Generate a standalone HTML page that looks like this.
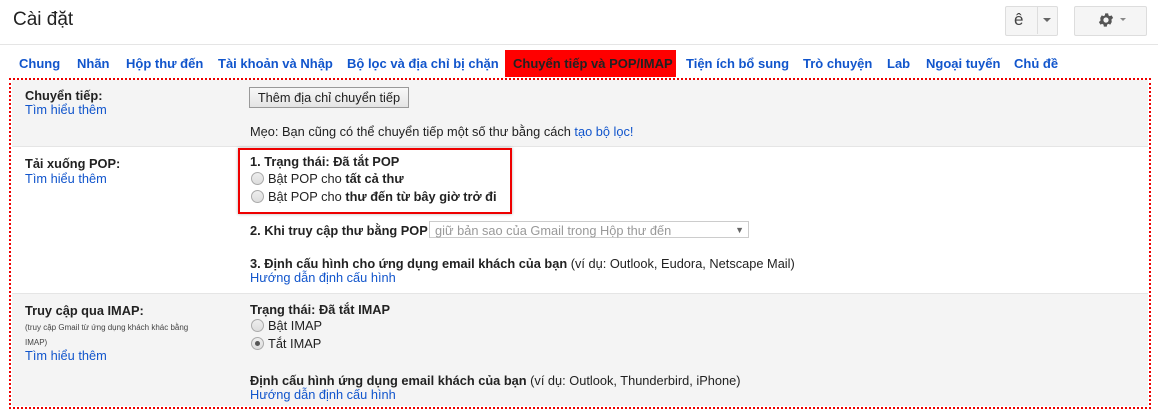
<!DOCTYPE html>
<html><head><meta charset="utf-8"><style>
body{margin:0;width:1158px;height:410px;background:#fff;font-family:"Liberation Sans",Arial,sans-serif;font-size:12.8px;color:#222;position:relative;overflow:hidden}
.a{position:absolute;white-space:nowrap}
a,.l{color:#15c;text-decoration:none}
.tab{position:absolute;top:56px;font-size:13px;color:#15c;font-weight:bold}
.b{font-weight:bold}
.radio{display:inline-block;width:11px;height:11px;border:1px solid #aaa;border-radius:50%;background:linear-gradient(#eee,#ddd);vertical-align:-2px;margin-right:4px;position:relative}
.radio.on:after{content:"";position:absolute;left:3px;top:3px;width:5px;height:5px;border-radius:50%;background:#555}
</style></head><body>
<div class="a" style="left:13px;top:9px;font-size:19px;color:#222">Cài đặt</div>
<div class="a" style="left:1005px;top:6px;width:51px;height:28px;border:1px solid #ddd;border-radius:2px;background:#f5f5f5"></div>
<div class="a" style="left:1037px;top:6px;width:1px;height:28px;background:#ddd"></div>
<div class="a" style="left:1014px;top:10px;font-size:17px;color:#444">ê</div>
<div class="a" style="left:1043px;top:18px;border:4px solid transparent;border-top:4px solid #666"></div>
<div class="a" style="left:1074px;top:6px;width:71px;height:28px;border:1px solid #ddd;border-radius:2px;background:#f5f5f5"></div>
<svg class="a" style="left:1097px;top:11px" width="18" height="18" viewBox="0 0 24 24"><path fill="#555" d="M19.4 13a7.5 7.5 0 000-2l2.1-1.6-2-3.5-2.5 1a7 7 0 00-1.700-1l-.4-2.7h-4l-.4 2.7a7 7 0 00-1.7 1l-2.5-1-2 3.5L4.6 11a7.5 7.5 0 000 2l-2.1 1.6 2 3.5 2.5-1a7 7 0 001.7 1l.4 2.7h4l.4-2.7a7 7 0 001.7-1l2.5 1 2-3.5zM12 15.5a3.5 3.5 0 110-7 3.5 3.5 0 010 7z"/></svg>
<div class="a" style="left:1120px;top:18px;border:3px solid transparent;border-top:3px solid #888"></div>
<div class="a" style="left:0;top:44px;width:1158px;height:1px;background:#e5e5e5"></div>

<div class="tab" style="left:19px">Chung</div>
<div class="tab" style="left:77px">Nhãn</div>
<div class="tab" style="left:126px">Hộp thư đến</div>
<div class="tab" style="left:218px">Tài khoản và Nhập</div>
<div class="tab" style="left:347px">Bộ lọc và địa chỉ bị chặn</div>
<div class="a" style="left:505px;top:50px;width:171px;height:27px;background:#f00"></div>
<div class="tab" style="left:513px;color:#222">Chuyển tiếp và POP/IMAP</div>
<div class="tab" style="left:686px">Tiện ích bổ sung</div>
<div class="tab" style="left:803px">Trò chuyện</div>
<div class="tab" style="left:887px">Lab</div>
<div class="tab" style="left:926px">Ngoại tuyến</div>
<div class="tab" style="left:1014px">Chủ đề</div>

<div class="a" style="left:12px;top:80px;width:1136px;height:66px;background:#f4f4f4;border-bottom:1px solid #e5e5e5"></div>
<div class="a" style="left:12px;top:293px;width:1136px;height:112px;background:#f4f4f4;border-top:1px solid #e5e5e5"></div>
<div class="a" style="left:9px;top:78px;width:1138px;height:327px;border:2px dotted #e00"></div>

<div class="a b" style="left:25px;top:88px">Chuyển tiếp:</div>
<div class="a l" style="left:25px;top:102px">Tìm hiểu thêm</div>
<div class="a" style="left:249px;top:87px;width:158px;height:19px;border:1px solid #999;background:linear-gradient(#f8f8f8,#e4e4e4);text-align:center;line-height:19px">Thêm địa chỉ chuyển tiếp</div>
<div class="a" style="left:250px;top:124px">Mẹo: Bạn cũng có thể chuyển tiếp một số thư bằng cách <span class="l">tạo bộ lọc!</span></div>

<div class="a b" style="left:25px;top:156px">Tải xuống POP:</div>
<div class="a l" style="left:25px;top:171px">Tìm hiểu thêm</div>
<div class="a" style="left:238px;top:148px;width:270px;height:62px;border:2px solid #e00;box-shadow:0 0 3px rgba(0,0,0,.3)"></div>
<div class="a b" style="left:250px;top:154px">1. Trạng thái: Đã tắt POP</div>
<div class="a" style="left:251px;top:171px"><span class="radio"></span>Bật POP cho <b>tất cả thư</b></div>
<div class="a" style="left:251px;top:189px"><span class="radio"></span>Bật POP cho <b>thư đến từ bây giờ trở đi</b></div>
<div class="a b" style="left:250px;top:223px">2. Khi truy cập thư bằng POP</div>
<div class="a" style="left:429px;top:221px;height:17px;border:1px solid #ccc;color:#999;line-height:17px;padding-left:5px;box-sizing:border-box;width:320px">giữ bản sao của Gmail trong Hộp thư đến<span style="position:absolute;right:4px;font-size:9px;color:#666">▼</span></div>
<div class="a" style="left:250px;top:256px"><b>3. Định cấu hình cho ứng dụng email khách của bạn</b> (ví dụ: Outlook, Eudora, Netscape Mail)</div>
<div class="a l" style="left:250px;top:270px">Hướng dẫn định cấu hình</div>

<div class="a b" style="left:25px;top:303px">Truy cập qua IMAP:</div>
<div class="a" style="left:25px;top:320px;font-size:8px;color:#444;line-height:15px">(truy cập Gmail từ ứng dụng khách khác bằng<br>IMAP)</div>
<div class="a l" style="left:25px;top:348px">Tìm hiểu thêm</div>
<div class="a b" style="left:250px;top:302px">Trạng thái: Đã tắt IMAP</div>
<div class="a" style="left:251px;top:318px"><span class="radio"></span>Bật IMAP</div>
<div class="a" style="left:251px;top:336px"><span class="radio on"></span>Tắt IMAP</div>
<div class="a" style="left:250px;top:373px"><b>Định cấu hình ứng dụng email khách của bạn</b> (ví dụ: Outlook, Thunderbird, iPhone)</div>
<div class="a l" style="left:250px;top:387px">Hướng dẫn định cấu hình</div>
</body></html>
